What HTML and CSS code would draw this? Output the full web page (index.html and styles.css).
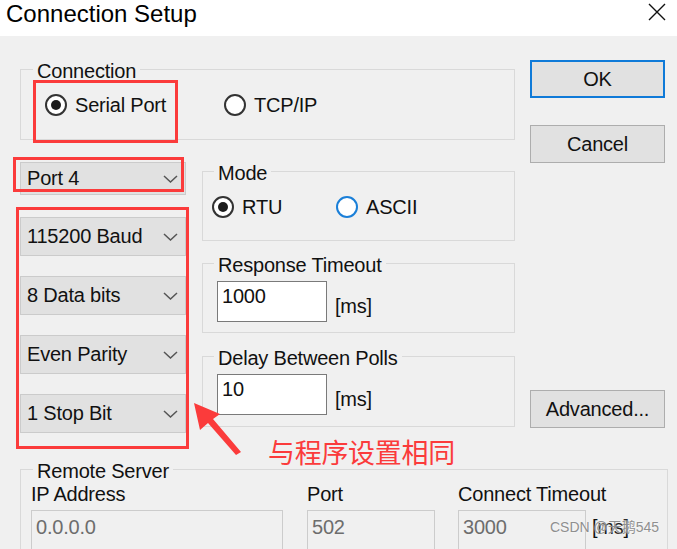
FILE: index.html
```html
<!DOCTYPE html>
<html lang="en">
<head>
  <meta charset="UTF-8">
  <meta name="viewport" content="width=device-width, initial-scale=1.0">
  <title>Connection Setup</title>
  <link rel="stylesheet" href="styles.css">
</head>
<body>

  <div class="dialog">
    <div class="titlebar">
      <span class="title">Connection Setup</span>
      <svg class="close" width="18" height="18" viewBox="0 0 18 18">
        <path d="M1 1 L17 17 M17 1 L1 17" stroke="#111" stroke-width="1.4" fill="none"/>
      </svg>
    </div>

    <div class="content">
      <div class="left">
        <div class="group conn">
          <div class="legend">Connection</div>
          <div class="radios">
            <div class="radio serial"><span class="dot on"></span>Serial Port</div>
            <div class="radio"><span class="dot"></span>TCP/IP</div>
          </div>
        </div>

        <div class="lower">
          <div class="combos">
            <div class="combo port">Port 4<svg class="chev" width="15" height="8" viewBox="0 0 15 8"><path d="M1 1 L7.5 7 L14 1" stroke="#555" stroke-width="1.5" fill="none"/></svg></div>
            <div class="combo">115200 Baud<svg class="chev" width="15" height="8" viewBox="0 0 15 8"><path d="M1 1 L7.5 7 L14 1" stroke="#555" stroke-width="1.5" fill="none"/></svg></div>
            <div class="combo">8 Data bits<svg class="chev" width="15" height="8" viewBox="0 0 15 8"><path d="M1 1 L7.5 7 L14 1" stroke="#555" stroke-width="1.5" fill="none"/></svg></div>
            <div class="combo">Even Parity<svg class="chev" width="15" height="8" viewBox="0 0 15 8"><path d="M1 1 L7.5 7 L14 1" stroke="#555" stroke-width="1.5" fill="none"/></svg></div>
            <div class="combo">1 Stop Bit<svg class="chev" width="15" height="8" viewBox="0 0 15 8"><path d="M1 1 L7.5 7 L14 1" stroke="#555" stroke-width="1.5" fill="none"/></svg></div>
          </div>

          <div class="groups">
            <div class="group mode">
              <div class="legend">Mode</div>
              <div class="radios">
                <div class="radio rtu"><span class="dot on"></span>RTU</div>
                <div class="radio"><span class="dot focus"></span>ASCII</div>
              </div>
            </div>
            <div class="group timing response">
              <div class="legend">Response Timeout</div>
              <div class="field-row">
                <div class="input">1000</div>
                <span class="unit">[ms]</span>
              </div>
            </div>
            <div class="group timing delay">
              <div class="legend">Delay Between Polls</div>
              <div class="field-row">
                <div class="input">10</div>
                <span class="unit">[ms]</span>
              </div>
            </div>
          </div>
        </div>
      </div>

      <div class="right">
        <button class="btn ok">OK</button>
        <button class="btn cancel">Cancel</button>
        <button class="btn advanced">Advanced...</button>
      </div>
    </div>

    <div class="group remote">
      <div class="legend">Remote Server</div>
      <div class="fields">
        <div class="field ip">
          <div class="field-label">IP Address</div>
          <div class="input disabled">0.0.0.0</div>
        </div>
        <div class="field port-field">
          <div class="field-label">Port</div>
          <div class="input disabled">502</div>
        </div>
        <div class="field timeout">
          <div class="field-label">Connect Timeout</div>
          <div class="field-row">
            <div class="input disabled">3000</div>
            <span class="unit top">[ms]</span>
          </div>
        </div>
      </div>
    </div>

    <!-- annotations drawn over the dialog -->
    <div class="mark mark-conn"></div>
    <div class="mark mark-port"></div>
    <div class="mark mark-serial"></div>
    <svg class="arrow" width="60" height="60" viewBox="0 0 60 60">
      <polygon points="4,3 30,14 23,19 51,52 46,55 18,23 10,30" fill="#fb3b3b"/>
    </svg>
    <div class="note">与程序设置相同</div>
    <div class="watermark">CSDN @天鹅545</div>
  </div>

</body>
</html>
```

FILE: styles.css
```css
body {
  margin: 0;
  background-color: #f0f0f0;
}
.dialog {
  position: relative;
  width: 677px;
  height: 549px;
  overflow: hidden;
  background-color: #f0f0f0;
  font-family: "Liberation Sans", Arial, sans-serif;
  font-size: 20px;
  letter-spacing: -0.2px;
  color: #111;
}
.titlebar {
  height: 36px;
  background-color: #fff;
  display: flex;
  justify-content: space-between;
  align-items: flex-start;
  padding: 2px 11px 0 6px;
  box-sizing: border-box;
}
.title {
  font-size: 24px;
  line-height: 24px;
  letter-spacing: 0;
  color: #000;
}
.close {
  margin-top: 1px;
}
.content {
  display: flex;
  gap: 15px;
  padding-left: 20px;
}
.left {
  width: 495px;
}
.right {
  width: 135px;
  display: flex;
  flex-direction: column;
}

/* group boxes */
.group {
  border: 1px solid #d9d9d9;
  box-sizing: border-box;
}
.legend {
  width: fit-content;
  margin: -9px 0 0 12px;
  padding: 0 4px;
  line-height: 20px;
  background-color: #f0f0f0;
}
.conn {
  margin-top: 33px;
  height: 71px;
  padding-left: 24px;
}
.radios {
  display: flex;
  margin-top: 13px;
  height: 22px;
  align-items: center;
}
.conn .legend {
  margin-left: -12px;
}
.radio {
  display: flex;
  align-items: center;
  gap: 8px;
  line-height: 22px;
}
.serial {
  width: 179px;
}
.rtu {
  width: 124px;
}
.dot {
  width: 22px;
  height: 22px;
  border: 2px solid #333;
  border-radius: 50%;
  background-color: #fff;
  box-sizing: border-box;
  display: flex;
  align-items: center;
  justify-content: center;
}
.dot.on::after {
  content: "";
  width: 10px;
  height: 10px;
  border-radius: 50%;
  background-color: #1c1c1c;
}
.dot.focus {
  border-color: #1a7fd8;
}

/* left combos */
.lower {
  display: flex;
  gap: 16px;
  margin-top: 22px;
}
.combos {
  width: 166px;
  display: flex;
  flex-direction: column;
  gap: 20px;
}
.combo {
  height: 39px;
  background-color: #e1e1e1;
  border: 1px solid #cbcbcb;
  box-sizing: border-box;
  display: flex;
  align-items: center;
  justify-content: space-between;
  padding: 0 7px 0 6px;
}
.combo.port {
  height: 33px;
  margin-bottom: 2px;
}

/* right side groups */
.groups {
  width: 313px;
}
.mode {
  margin-top: 9px;
  height: 70px;
  padding-left: 9px;
}
.mode .legend {
  margin-left: 2px;
}
.timing {
  height: 70px;
  padding-left: 14px;
}
.timing .legend {
  margin-left: -3px;
}
.response {
  margin-top: 22px;
}
.delay {
  margin-top: 23px;
  height: 71px;
}
.field-row {
  display: flex;
  align-items: flex-end;
  gap: 8px;
  margin-top: 6px;
}
.input {
  width: 110px;
  height: 41px;
  box-sizing: border-box;
  border: 1px solid #7a7a7a;
  background-color: #fff;
  padding: 4px 4px;
  line-height: 20px;
}
.unit {
  line-height: 20px;
  padding-bottom: 6px;
}

/* buttons */
.btn {
  height: 38px;
  font: inherit;
  letter-spacing: -0.2px;
  color: #111;
  background-color: #e1e1e1;
  border: 1px solid #adadad;
  padding: 0;
}
.ok {
  margin-top: 24px;
  border: 2px solid #0f7ad8;
}
.cancel {
  margin-top: 27px;
}
.advanced {
  margin-top: 227px;
}

/* remote server */
.remote {
  margin: 36px 0 0 20px;
  width: 648px;
  height: 110px;
  padding-left: 10px;
}
.remote .legend {
  margin-left: 2px;
}
.fields {
  display: flex;
  margin-top: 3px;
}
.field-label {
  line-height: 20px;
  margin-bottom: 6px;
}
.ip {
  width: 276px;
}
.ip .input {
  width: 252px;
}
.port-field {
  width: 151px;
}
.field .input {
  height: 40px;
}
.port-field .input,
.timeout .input {
  width: 128px;
}
.timeout .field-row {
  margin-top: 0;
  align-items: flex-start;
  gap: 6px;
}
.input.disabled {
  background-color: #f0f0f0;
  border-color: #cccccc;
  color: #6d6d6d;
  padding-top: 6px;
}
.unit.top {
  padding: 7px 0 0;
}

/* annotations */
.mark {
  position: absolute;
  border: 3px solid #fb3b3b;
  box-sizing: border-box;
}
.mark-conn {
  left: 33px;
  top: 80px;
  width: 145px;
  height: 63px;
}
.mark-port {
  left: 13px;
  top: 157px;
  width: 171px;
  height: 35px;
}
.mark-serial {
  left: 16px;
  top: 207px;
  width: 173px;
  height: 242px;
}
.arrow {
  position: absolute;
  left: 190px;
  top: 400px;
}
.note {
  position: absolute;
  left: 268px;
  top: 438px;
  font-family: "Noto Sans CJK SC", sans-serif;
  font-size: 27px;
  line-height: 27px;
  letter-spacing: -0.3px;
  color: #fb3b3b;
}
.watermark {
  position: absolute;
  left: 550px;
  top: 518px;
  font-family: "Liberation Sans", "Noto Sans CJK SC", sans-serif;
  font-size: 14px;
  letter-spacing: 0;
  line-height: 18px;
  color: #8f8f8f;
  text-shadow: 0 0 2px #fff;
}
```
